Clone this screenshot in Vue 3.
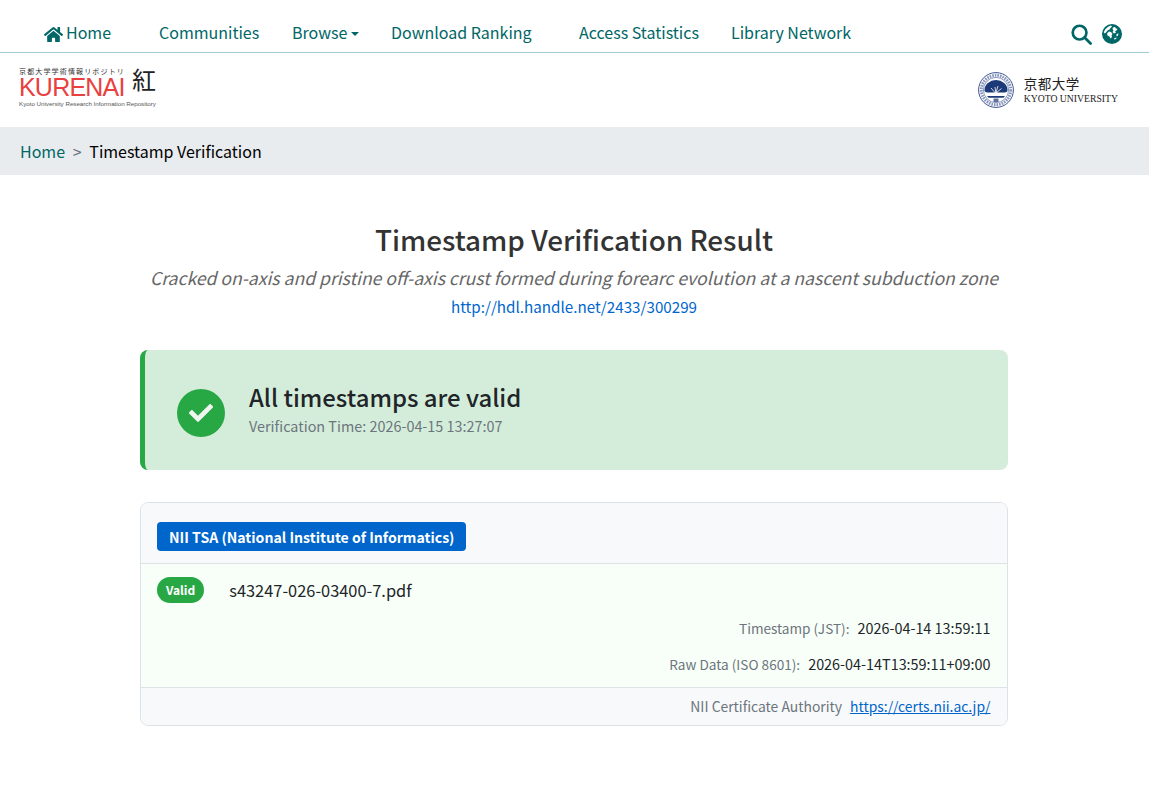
<script setup>
const navItems = [
  { label: 'Communities', width: 133 },
  { label: 'Browse', width: 99, caret: true },
  { label: 'Download Ranking', width: 188 },
  { label: 'Access Statistics', width: 152 },
  { label: 'Library Network', width: 152 },
]
</script>

<template>
  <div class="page">
    <nav class="topnav">
      <a class="nav-item nav-home">
        <svg class="home-icon" viewBox="0 0 576 512"><path d="M280.4 148.3 96 300.1V464a16 16 0 0 0 16 16l112-.3a16 16 0 0 0 15.9-16V368a16 16 0 0 1 16-16h64a16 16 0 0 1 16 16v95.6a16 16 0 0 0 16 16.1l112 .3a16 16 0 0 0 16-16V300L295.700 148.300a12.200 12.200 0 0 0-15.300 0zM571.600 251.500 488 182.600V44a12 12 0 0 0-12-12h-56a12 12 0 0 0-12 12v72.600L318.500 43a48 48 0 0 0-61 0L4.300 251.500a12 12 0 0 0-1.600 16.900l25.500 31A12 12 0 0 0 45.200 301l235.200-193.700a12.200 12.200 0 0 1 15.300 0L530.900 301a12 12 0 0 0 16.900-1.600l25.500-31a12 12 0 0 0-1.700-16.900z"/></svg>
        Home
      </a>
      <a v-for="item in navItems" :key="item.label" class="nav-item" :style="{ width: item.width + 'px' }">
        {{ item.label }}<span v-if="item.caret" class="caret"></span>
      </a>
      <div class="nav-icons">
        <svg class="icon-search" viewBox="0 0 22 22" fill="none" stroke="#006666" stroke-width="2.800"><circle cx="9" cy="9" r="7.200"/><path d="M14.200 14.200l6.300 6.300" stroke-linecap="round"/></svg>
        <svg class="icon-globe" viewBox="0 0 20 20">
          <circle cx="10" cy="10" r="10" fill="#006666"/>
          <path d="M6.500 2.500 9 1.500 10 2.500 8.500 4 7.500 5.500 5.500 6.500 4 8.500 2.500 9.500 1.800 8 3.500 5z" fill="#fff"/>
          <path d="M11 3.500 13 3 14 4.500 15.500 5 14.500 6.500 13 7 14 8.500 12 9.500 10.500 8 11.500 6.500 10.500 5z" fill="#fff"/>
          <path d="M7 7.500 9 8 10.500 10 9.500 11.500 10 13 8.500 14.500 7.500 12.500 5.500 11.500 5 9.500z" fill="#fff"/>
          <path d="M14.500 10 16.500 9.500 16 11.500 14.500 12.500zM12.500 14l2 -.5-.5 1.500-2 .5z" fill="#fff"/>
        </svg>
      </div>
    </nav>

    <header class="logo-row">
      <div class="kurenai">
        <div class="kurenai-jp">京都大学学術情報リポジトリ</div>
        <div class="kurenai-name">KURENAI</div>
        <div class="kurenai-en">Kyoto University Research Information Repository</div>
        <div class="kurenai-kanji">紅</div>
      </div>
      <div class="kyoto">
        <svg class="crest" viewBox="0 0 36 36">
          <circle cx="18" cy="18" r="17.400" fill="#fff" stroke="#3d5590" stroke-width="1"/>
          <circle cx="18" cy="18" r="14.700" fill="none" stroke="#8695bb" stroke-width="3" stroke-dasharray="1.600 1"/>
          <circle cx="18" cy="18" r="12.600" fill="#fff" stroke="#3d5590" stroke-width=".6"/>
          <path d="M6.500 18a11.500 10 0 0 1 23 0c.3 1.500-1 2.500-3 2.500H9.500c-2 0-3.300-1-3-2.500z" fill="#1d3a78"/>
          <path d="M16.500 20.500h3l.8 3.500h-4.600z" fill="#fff"/>
          <path d="M17 15l.8 5.500M20 14l-2 6.500M13 16l4 4.500M23.500 16.500l-5 4" stroke="#fff" stroke-width=".8" fill="none"/>
          <path d="M9 24h18l-1.500 1.700h-15z" fill="#1d3a78"/>
          <rect x="15.500" y="26.500" width="5" height="3.500" fill="#5f739f"/>
        </svg>
        <div class="kyoto-text">
          <div class="kyoto-jp">京都大学</div>
          <div class="kyoto-en">KYOTO UNIVERSITY</div>
        </div>
      </div>
    </header>

    <div class="breadcrumb">
      <a class="crumb-link">Home</a>
      <span class="crumb-sep">&gt;</span>
      <span class="crumb-current">Timestamp Verification</span>
    </div>

    <main class="content">
      <div class="result-head">
        <h1>Timestamp Verification Result</h1>
        <p class="paper-title">Cracked on-axis and pristine off-axis crust formed during forearc evolution at a nascent subduction zone</p>
        <a class="handle">http://hdl.handle.net/2433/300299</a>
      </div>

      <section class="summary">
        <div class="check-circle">
          <svg viewBox="0 0 512 512"><path d="M173.900 439.400 7.500 273c-10-10-10-26.200 0-36.200l36.200-36.200c10-10 26.200-10 36.200 0L192 312.700 432.100 72.600c10-10 26.200-10 36.200 0l36.200 36.200c10 10 10 26.200 0 36.200L210.100 439.400c-10 10-26.200 10-36.200 0z"/></svg>
        </div>
        <div class="summary-text">
          <div class="summary-title">All timestamps are valid</div>
          <div class="summary-time">Verification Time: 2026-04-15 13:27:07</div>
        </div>
      </section>

      <section class="card">
        <div class="card-head">
          <span class="tsa-badge">NII TSA (National Institute of Informatics)</span>
        </div>
        <div class="card-body">
          <div class="file-row">
            <span class="valid-badge">Valid</span>
            <span class="file-name">s43247-026-03400-7.pdf</span>
          </div>
          <div class="meta-row"><span class="meta-label">Timestamp (JST):</span><span class="meta-value">2026-04-14 13:59:11</span></div>
          <div class="meta-row"><span class="meta-label">Raw Data (ISO 8601):</span><span class="meta-value">2026-04-14T13:59:11+09:00</span></div>
        </div>
        <div class="card-foot">
          <span class="foot-label">NII Certificate Authority</span>
          <a class="foot-link">https://certs.nii.ac.jp/</a>
        </div>
      </section>
    </main>
  </div>
</template>

<style>
html, body { background: #fff; }
</style>

<style scoped>
.page {
  width: calc(100% - 7px);
  font-family: "Noto Sans CJK JP", "Noto Sans", sans-serif;
  color: #212529;
  font-size: 16px;
}

.topnav {
  display: flex;
  align-items: center;
  border-bottom: 1px solid #9fc9d3;
  padding-left: 44px;
  padding-right: 27px;
  padding-top: 12px;
  box-sizing: content-box;
  height: 40px;
  color: #006666;
}
.nav-item {
  display: block;
  white-space: nowrap;
  color: #006666;
  line-height: 24px;
}
.nav-home {
  width: 115px;
  display: flex;
  align-items: center;
  gap: 3px;
}
.home-icon {
  width: 19px;
  height: 17px;
  margin-top: 4px;
  fill: #006666;
}
.caret {
  display: inline-block;
  margin-left: 4px;
  vertical-align: 3px;
  border-top: 4.800px solid #006666;
  border-left: 4.800px solid transparent;
  border-right: 4.800px solid transparent;
}
.nav-icons {
  margin-left: auto;
  margin-top: 4px;
  display: flex;
  align-items: center;
  gap: 10px;
}
.icon-search { width: 21px; height: 21px; }
.icon-globe { width: 20px; height: 20px; }

.logo-row {
  height: 74px;
  display: flex;
  justify-content: space-between;
  align-items: center;
  padding: 0 30px 0 19px;
}
.kurenai {
  position: relative;
  width: 138px;
  height: 38px;
  margin-top: -8px;
}
.kurenai-jp {
  font-size: 7px;
  line-height: 7px;
  padding-top: 1px;
  color: #333;
  letter-spacing: 1.150px;
  white-space: nowrap;
}
.kurenai-name {
  font-family: "Liberation Sans", sans-serif;
  font-size: 25px;
  line-height: 20px;
  margin-top: 1.500px;
  color: #e8403e;
  letter-spacing: -.8px;
}
.kurenai-kanji {
  position: absolute;
  left: 113px;
  top: -3px;
  font-size: 24px;
  line-height: 30px;
  color: #222;
}
.kurenai-en {
  font-family: "Liberation Sans", sans-serif;
  font-size: 6.200px;
  line-height: 7px;
  margin-top: 3px;
  color: #555;
  white-space: nowrap;
}
.kyoto {
  display: flex;
  align-items: center;
  gap: 10px;
  margin-right: 1px;
}
.crest { width: 36px; height: 36px; }
.kyoto-jp {
  font-size: 13.500px;
  line-height: 16px;
  letter-spacing: .5px;
  color: #222;
}
.kyoto-en {
  font-family: "Liberation Serif", serif;
  font-size: 9.700px;
  line-height: 12px;
  color: #222;
  margin-top: 2px;
}

.breadcrumb {
  height: 48px;
  background: #e9ecef;
  display: flex;
  align-items: center;
  padding-left: 20px;
  line-height: 24px;
}
.crumb-link { color: #006666; }
.crumb-sep { margin: 0 7.700px; color: #6c757d; }
.crumb-current { color: #000; }

.content {
  width: 868px;
  margin-left: 140px;
  padding-top: 43px;
}
.result-head {
  text-align: center;
  margin-bottom: 31px;
}
h1 {
  margin: 0 0 2px;
  font-size: 27.850px;
  font-weight: 500;
  line-height: 42px;
  color: #333;
}
.paper-title {
  margin: 0;
  font-size: 17.600px;
  font-style: italic;
  color: #666;
  line-height: 31px;
  white-space: nowrap;
}
.handle {
  display: block;
  color: #0066cc;
  font-size: 15.200px;
  line-height: 26px;
}

.summary {
  height: 120px;
  background: #d4edda;
  border-left: 5px solid #28a745;
  border-radius: 8px;
  display: flex;
  align-items: center;
  gap: 24px;
  padding-left: 32px;
  box-sizing: border-box;
}
.check-circle {
  width: 48px;
  height: 48px;
  margin-top: 5px;
  border-radius: 50%;
  background: #28a745;
  display: flex;
  align-items: center;
  justify-content: center;
}
.check-circle svg { width: 24px; height: 24px; fill: #f0f5f0; }
.summary-text { margin-top: -6px; }
.summary-title {
  font-size: 23.900px;
  font-weight: 500;
  line-height: 36px;
  margin-bottom: 1px;
  color: #212529;
}
.summary-time {
  font-size: 14.400px;
  line-height: 20px;
  color: #6c757d;
}

.card {
  margin-top: 32px;
  border: 1px solid #dee2e6;
  border-radius: 8px;
  overflow: hidden;
}
.card-head {
  background: #f8f9fa;
  border-bottom: 1px solid #dee2e6;
  display: flex;
  align-items: center;
  padding: 6px 16px 0;
  height: 54px;
  box-sizing: content-box;
}
.tsa-badge {
  background: #0066cc;
  color: #fff;
  font-size: 14.100px;
  font-weight: 700;
  line-height: 21px;
  padding: 5px 12px 3px;
  border-radius: 4px;
}
.card-body {
  background: #f8fff8;
  padding: 13px 16.500px 13px 16px;
}
.file-row {
  display: flex;
  align-items: center;
  gap: 25px;
  height: 26px;
  margin-bottom: 14px;
}
.valid-badge {
  background: #28a745;
  color: #fff;
  font-size: 12px;
  font-weight: 700;
  line-height: 18px;
  padding: 4px 9px;
  border-radius: 13px;
}
.file-name { font-size: 16.400px; color: #212529; }
.meta-row {
  display: flex;
  justify-content: flex-end;
  align-items: baseline;
  font-size: 14.400px;
  line-height: 21px;
  height: 21px;
  margin-bottom: 15px;
}
.meta-row:last-child { margin-bottom: 0; }
.meta-label { color: #6c757d; font-size: 13.600px; margin-right: 8px; }
.meta-value { color: #212529; }
.card-foot {
  background: #f8f9fa;
  border-top: 1px solid #dee2e6;
  height: 38px;
  display: flex;
  justify-content: flex-end;
  align-items: center;
  padding: 0 16.500px 2px 0;
  box-sizing: border-box;
  font-size: 13.920px;
}
.foot-label { color: #6c757d; margin-right: 8px; }
.foot-link { color: #0066cc; text-decoration: underline; }
</style>
